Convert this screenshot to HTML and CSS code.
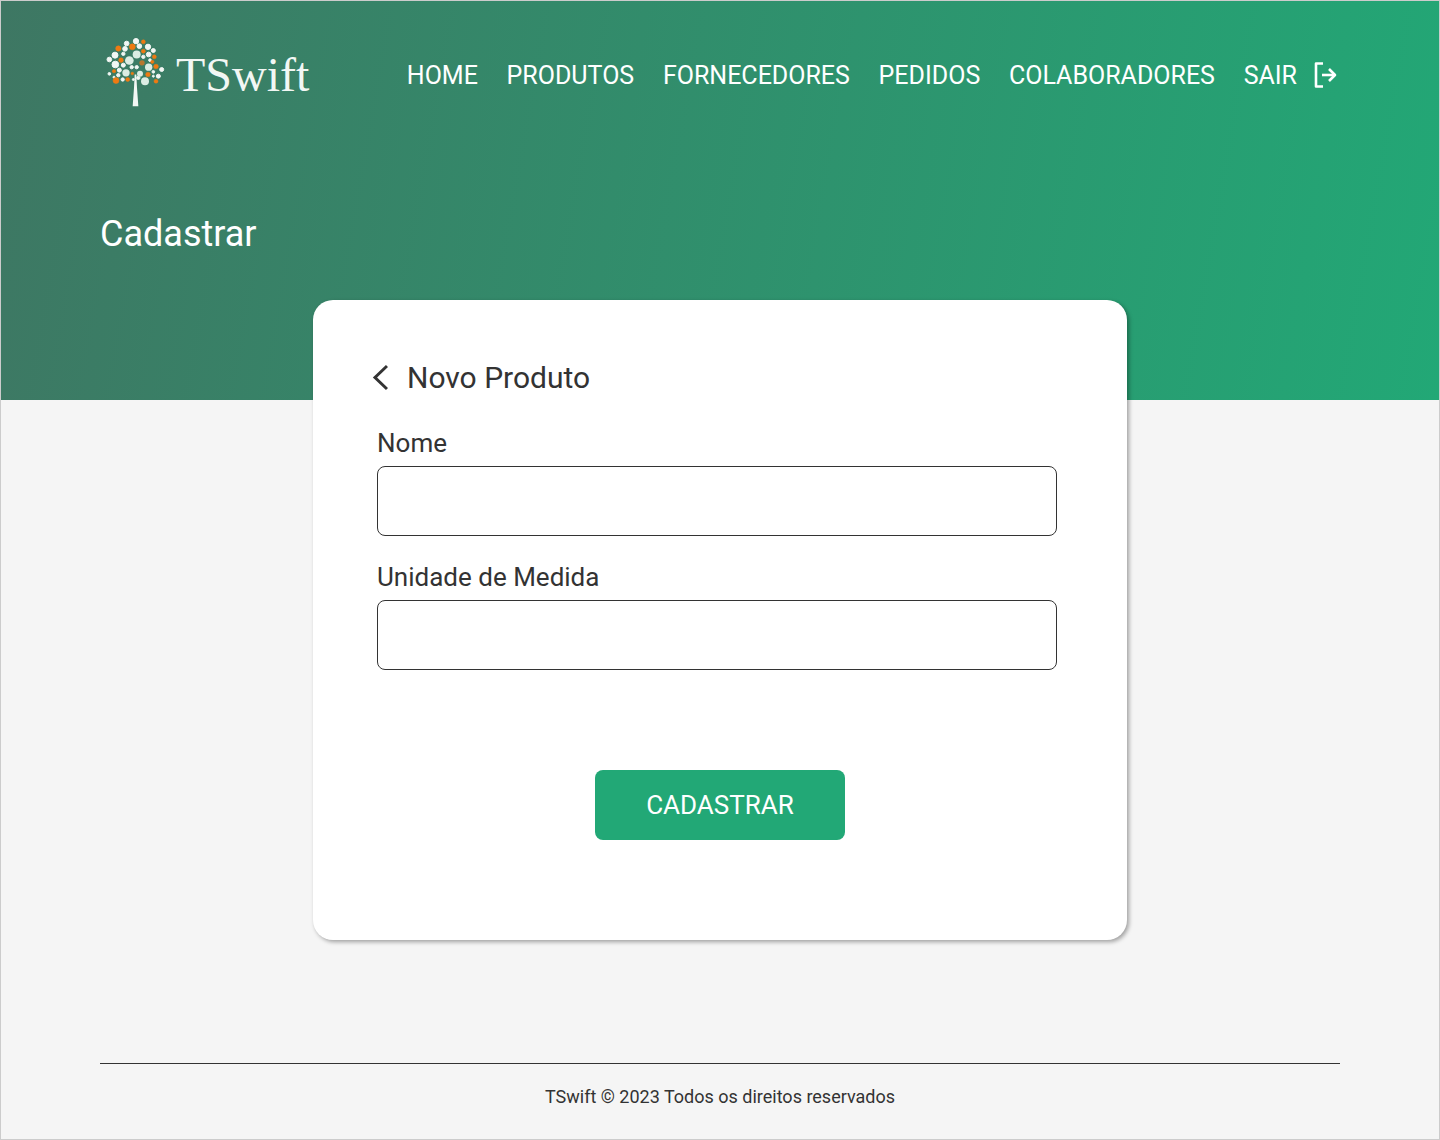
FILE: index.html
```html
<!DOCTYPE html>
<html lang="pt-BR">
<head>
    <meta charset="UTF-8">
    <title>TSwift - Cadastrar</title>
    <link rel="stylesheet" href="styles.css">
</head>
<body>
<div class="page">
    <header class="topo">
        <div class="barra">
            <a class="logo" href="#">
                <svg class="logo-arvore" width="60" height="72" viewBox="45 35 180 215">
                    <polygon fill="#f2f7f4" points="128,245 145,245 141,190 139,150 134,150 132,190"/>
                    <g fill="#f2f7f4" stroke="#f2f7f4" stroke-width="3">
                        <circle cx="110" cy="57" r="7"/><circle cx="138" cy="50" r="8"/><circle cx="148" cy="65" r="7"/>
                        <circle cx="174" cy="67" r="8"/><circle cx="190" cy="78" r="6"/><circle cx="105" cy="73" r="7"/>
                        <circle cx="75" cy="92" r="9"/><circle cx="58" cy="105" r="7"/><circle cx="100" cy="88" r="5"/>
                        <circle cx="176" cy="90" r="7"/><circle cx="160" cy="97" r="5"/><circle cx="180" cy="107" r="4"/>
                        <circle cx="76" cy="120" r="10"/><circle cx="100" cy="122" r="6"/><circle cx="125" cy="128" r="5"/>
                        <circle cx="140" cy="128" r="5"/><circle cx="215" cy="135" r="6"/><circle cx="58" cy="148" r="4"/>
                        <circle cx="88" cy="137" r="6"/><circle cx="85" cy="152" r="5"/><circle cx="205" cy="155" r="6"/>
                        <circle cx="190" cy="142" r="4"/><circle cx="98" cy="165" r="5"/><circle cx="72" cy="158" r="3"/>
                        <circle cx="145" cy="160" r="5"/><circle cx="130" cy="165" r="3"/><circle cx="190" cy="155" r="3"/>
                    </g>
                    <g fill="#dcede4">
                        <circle cx="140" cy="90" r="12"/><circle cx="118" cy="108" r="13"/><circle cx="176" cy="128" r="11"/>
                        <circle cx="108" cy="145" r="11"/><circle cx="150" cy="148" r="9"/><circle cx="165" cy="170" r="12"/>
                    </g>
                    <g fill="#ee7a12" stroke="#ee7a12" stroke-width="1.5">
                        <circle cx="85" cy="72" r="8"/><circle cx="127" cy="67" r="9"/><circle cx="160" cy="52" r="6"/>
                        <circle cx="93" cy="107" r="7"/><circle cx="160" cy="80" r="6"/><circle cx="193" cy="97" r="6"/>
                        <circle cx="187" cy="112" r="5"/><circle cx="198" cy="126" r="7"/><circle cx="72" cy="140" r="5"/>
                        <circle cx="127" cy="147" r="4"/><circle cx="174" cy="150" r="7"/><circle cx="78" cy="168" r="9"/>
                        <circle cx="113" cy="165" r="6"/><circle cx="198" cy="170" r="6"/>
                    </g>
                    <circle cx="156" cy="115" r="8" fill="#b8772f"/>
                </svg>
                <span class="logo-texto">TSwift</span>
            </a>
            <nav class="menu">
                <a href="#">HOME</a>
                <a href="#">PRODUTOS</a>
                <a href="#">FORNECEDORES</a>
                <a href="#">PEDIDOS</a>
                <a href="#">COLABORADORES</a>
                <a class="sair" href="#">SAIR
                    <svg width="24" height="26" viewBox="0 0 24 26" fill="none" stroke="#fff" stroke-width="2.6" stroke-linejoin="round">
                        <path d="M9 1.5H2V24.5H9"/>
                        <path d="M8 13H21"/>
                        <path d="M15 7L21 13L15 19"/>
                    </svg>
                </a>
            </nav>
        </div>
        <h1 class="titulo">Cadastrar</h1>
    </header>

    <main class="cartao">
        <div class="cartao-topo">
            <a class="voltar" href="#">
                <svg width="16" height="27" viewBox="0 0 16 27" fill="none" stroke="#333" stroke-width="3">
                    <path d="M15 2L3 13.5L15 25"/>
                </svg>
            </a>
            <h2>Novo Produto</h2>
        </div>
        <form class="formulario">
            <label class="campo">
                <span>Nome</span>
                <input type="text">
            </label>
            <label class="campo">
                <span>Unidade de Medida</span>
                <input type="text">
            </label>
            <button class="botao" type="button">CADASTRAR</button>
        </form>
    </main>

    <footer class="rodape">TSwift © 2023 Todos os direitos reservados</footer>
</div>
</body>
</html>
```

FILE: styles.css
```css
* {
    box-sizing: border-box;
}

body {
    margin: 0;
    font-family: 'Roboto', sans-serif;
    color: #333;
    background: #f5f5f5;
}

.page {
    height: 1140px;
    border: 1px solid #ccc;
    background: #f5f5f5;
}

/* Topo */
.topo {
    height: 399px;
    padding: 30px 101px 0 99px;
    background: linear-gradient(100deg, #3e7763, #22a876);
}

.barra {
    display: flex;
    justify-content: space-between;
    align-items: center;
    height: 88px;
}

.logo {
    display: flex;
    align-items: center;
    gap: 11px;
    margin: 0 0 3px 5px;
    text-decoration: none;
}

.logo-arvore {
    margin-bottom: 3px;
}

.logo-texto {
    margin-top: 2px;
    font-family: 'Liberation Serif', serif;
    font-size: 48px;
    color: #f2f7f4;
}

.menu {
    display: flex;
    align-items: center;
    gap: 28.7px;
}

.menu a {
    font-size: 25px;
    color: #fff;
    text-decoration: none;
}

.menu .sair {
    display: flex;
    align-items: center;
    gap: 17px;
}

.titulo {
    margin: 91px 0 0;
    font-size: 36px;
    font-weight: 400;
    line-height: 48px;
    color: #fff;
}

/* Cartao */
.cartao {
    width: 814px;
    height: 640px;
    margin: -100px auto 0;
    padding: 55px 70px 0 64px;
    background: #fff;
    border-radius: 20px;
    box-shadow: 2px 2px 4px rgba(0, 0, 0, 0.35);
}

.cartao-topo {
    display: flex;
    align-items: center;
    gap: 19px;
    height: 44px;
    margin-left: -5px;
}

.cartao-topo h2 {
    margin: 0;
    font-size: 30px;
    font-weight: 400;
}

.voltar {
    display: flex;
}

.formulario {
    display: flex;
    flex-direction: column;
    margin-top: 29px;
}

.campo {
    display: flex;
    flex-direction: column;
    gap: 8px;
    margin-bottom: 26px;
    font-size: 26px;
}

.campo span {
    line-height: 30px;
}

.campo input {
    height: 70px;
    border: 1px solid #333;
    border-radius: 8px;
    background: #fff;
}

.botao {
    align-self: center;
    width: 250px;
    height: 70px;
    margin: 74px 0 0 6px;
    border: 0;
    border-radius: 8px;
    font-family: inherit;
    font-size: 26px;
    color: #fff;
    background: #22a876;
}

/* Rodape */
.rodape {
    height: 60px;
    margin: 123px 99px 0;
    padding-top: 22px;
    border-top: 1px solid #333;
    font-size: 18px;
    line-height: 21px;
    text-align: center;
}
```
